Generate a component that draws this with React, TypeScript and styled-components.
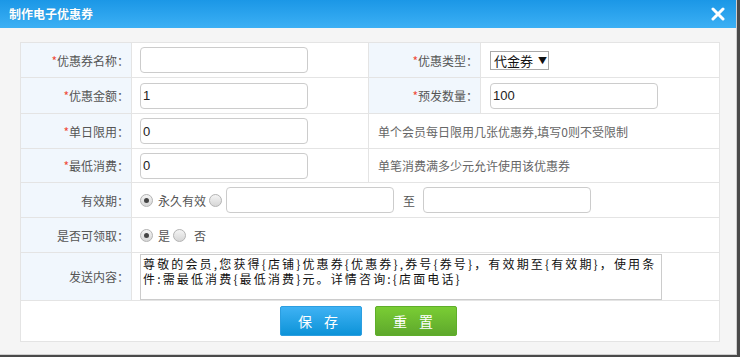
import React, { useState } from 'react';
import styled, { createGlobalStyle } from 'styled-components';

const GlobalStyle = createGlobalStyle`
  html, body {
    margin: 0;
    padding: 0;
    background: #4a4a4a;
  }
  * {
    box-sizing: border-box;
  }
`;

const Screen = styled.div`
  width: 740px;
  height: 357px;
  background: #4a4a4a;
  overflow: hidden;
`;

const Dialog = styled.div`
  width: 737px;
  height: 355px;
  background: #f5f5f5;
  border-right: 1px solid #cfcfcf;
  border-bottom: 1px solid #cfcfcf;
  display: flex;
  flex-direction: column;
  font-family: 'Noto Sans CJK SC', 'Noto Sans', sans-serif;
`;

const TitleBar = styled.div`
  height: 28px;
  flex-shrink: 0;
  display: flex;
  align-items: center;
  justify-content: space-between;
  padding: 0 11px 0 9px;
  background: linear-gradient(#1b97e6, #3cb0f4);
`;

const Title = styled.span`
  color: #ffffff;
  font-size: 12px;
  font-weight: 700;
  line-height: 16px;
  text-shadow: 0 0 1px rgba(0, 0, 0, 0.15);
`;

const CloseButton = styled.button`
  width: 14px;
  height: 14px;
  padding: 0;
  border: 0;
  background: transparent;
  cursor: pointer;
  display: flex;
`;

const Body = styled.div`
  padding: 14px 18px 0 20px;
`;

const FormTable = styled.table`
  width: 699px;
  border-collapse: collapse;
  table-layout: fixed;
  background: #ffffff;
  font-size: 12px;
  color: #555;

  td {
    border: 1px solid #e4e4e4;
    padding: 0;
  }
`;

const Row = styled.tr<{ h?: number }>`
  td {
    height: ${p => p.h || 35}px;
  }
`;

const LabelCell = styled.td`
  background: #f1f7fd;
  text-align: right;
  padding-right: 2px !important;
  white-space: nowrap;
`;

const Star = styled.span`
  color: #ef4b3a;
`;

const FieldCell = styled.td<{ pl?: number }>`
  padding-left: ${p => p.pl ?? 8}px !important;
`;

const HintCell = styled.td`
  padding-left: 9px !important;
  color: #666;
`;

const TextInput = styled.input`
  width: 168px;
  height: 26px;
  border: 1px solid #cccccc;
  border-radius: 4px;
  padding: 0 2px;
  font-family: 'Liberation Sans', Arial, sans-serif;
  font-size: 13px;
  color: #222;
  outline: none;
  display: block;
`;

const FakeSelect = styled.div`
  width: 59px;
  height: 19px;
  border: 1px solid #a9a9a9;
  display: flex;
  align-items: center;
  gap: 5px;
  padding-left: 3px;
  font-size: 13px;
  color: #111;
  background: #fff;
`;

const Caret = styled.span`
  font-size: 9px;
  color: #111;
`;

const InlineGroup = styled.div`
  display: flex;
  align-items: center;
`;

const Radio = styled.span<{ checked?: boolean }>`
  width: 13px;
  height: 13px;
  border-radius: 50%;
  border: 1px solid #b4b4b4;
  background: linear-gradient(#f4f4f4, #d6d6d6);
  position: relative;
  flex-shrink: 0;
  cursor: pointer;

  &::after {
    content: '';
    display: ${p => (p.checked ? 'block' : 'none')};
    position: absolute;
    left: 3px;
    top: 3px;
    width: 5px;
    height: 5px;
    border-radius: 50%;
    background: #444;
  }
`;

const RadioText = styled.span<{ ml?: number; mr?: number }>`
  margin-left: ${p => p.ml ?? 5}px;
  margin-right: ${p => p.mr ?? 3}px;
  color: #555;
`;

const DateInput = styled(TextInput)`
  margin-left: 4px;
`;

const ToText = styled.span`
  margin: 0 8px 0 9px;
  color: #555;
`;

const MessageWrap = styled.div`
  width: 522px;
  height: 46px;
  overflow: hidden;
`;

const MessageBox = styled.textarea`
  display: block;
  width: 522px;
  max-width: 522px;
  height: 46px;
  border: 1px solid #cccccc;
  resize: none;
  overflow: hidden;
  padding: 1px 2px;
  font-family: 'Noto Sans CJK SC', sans-serif;
  font-size: 12px;
  line-height: 15px;
  letter-spacing: 2.15px;
  color: #111;
  outline: none;
`;

const ButtonCell = styled.td`
  text-align: center;
`;

const ButtonRow = styled.div`
  display: flex;
  justify-content: center;
  gap: 13px;
  padding-right: 3px;
`;

const ActionButton = styled.button<{ variant: 'blue' | 'green' }>`
  width: 82px;
  height: 30px;
  border: 1px solid ${p => (p.variant === 'blue' ? '#2c9ee0' : '#5fae2a')};
  border-radius: 2px;
  background: ${p =>
    p.variant === 'blue'
      ? 'linear-gradient(#3fb2f4, #0d93d8)'
      : 'linear-gradient(#7acd34, #5ea82c)'};
  color: #ffffff;
  font-family: 'Noto Sans CJK SC', sans-serif;
  font-size: 14px;
  letter-spacing: 12px;
  padding-left: 12px;
  cursor: pointer;
`;

const defaultMessage =
  '尊敬的会员,您获得{店铺}优惠券{优惠券},券号{券号}，有效期至{有效期}，使用条件:需最低消费{最低消费}元。详情咨询:{店面电话}';

function App() {
  const [forever, setForever] = useState(true);
  const [claimable, setClaimable] = useState(true);

  return (
    <Screen>
      <GlobalStyle />
      <Dialog>
        <TitleBar>
          <Title>制作电子优惠券</Title>
          <CloseButton aria-label="关闭">
            <svg width="14" height="14" viewBox="0 0 14 14">
              <path d="M2 2 L12 12 M12 2 L2 12" stroke="#fff" strokeWidth="3" strokeLinecap="round" />
            </svg>
          </CloseButton>
        </TitleBar>
        <Body>
          <FormTable>
            <colgroup>
              <col style={{ width: 111 }} />
              <col style={{ width: 237 }} />
              <col style={{ width: 112 }} />
              <col style={{ width: 239 }} />
            </colgroup>
            <tbody>
              <Row>
                <LabelCell><Star>*</Star>优惠券名称：</LabelCell>
                <FieldCell><TextInput defaultValue="" /></FieldCell>
                <LabelCell><Star>*</Star>优惠类型：</LabelCell>
                <FieldCell pl={9}>
                  <FakeSelect>代金券<Caret>▼</Caret></FakeSelect>
                </FieldCell>
              </Row>
              <Row h={36}>
                <LabelCell><Star>*</Star>优惠金额：</LabelCell>
                <FieldCell><TextInput defaultValue="1" /></FieldCell>
                <LabelCell><Star>*</Star>预发数量：</LabelCell>
                <FieldCell pl={9}><TextInput defaultValue="100" /></FieldCell>
              </Row>
              <Row>
                <LabelCell><Star>*</Star>单日限用：</LabelCell>
                <FieldCell><TextInput defaultValue="0" /></FieldCell>
                <HintCell colSpan={2}>单个会员每日限用几张优惠券,填写0则不受限制</HintCell>
              </Row>
              <Row h={34}>
                <LabelCell><Star>*</Star>最低消费：</LabelCell>
                <FieldCell><TextInput defaultValue="0" /></FieldCell>
                <HintCell colSpan={2}>单笔消费满多少元允许使用该优惠券</HintCell>
              </Row>
              <Row>
                <LabelCell>有效期：</LabelCell>
                <FieldCell colSpan={3}>
                  <InlineGroup>
                    <Radio checked={forever} onClick={() => setForever(true)} />
                    <RadioText>永久有效</RadioText>
                    <Radio checked={!forever} onClick={() => setForever(false)} />
                    <DateInput />
                    <ToText>至</ToText>
                    <TextInput />
                  </InlineGroup>
                </FieldCell>
              </Row>
              <Row>
                <LabelCell>是否可领取：</LabelCell>
                <FieldCell colSpan={3}>
                  <InlineGroup>
                    <Radio checked={claimable} onClick={() => setClaimable(true)} />
                    <RadioText>是</RadioText>
                    <Radio checked={!claimable} onClick={() => setClaimable(false)} />
                    <RadioText ml={8}>否</RadioText>
                  </InlineGroup>
                </FieldCell>
              </Row>
              <Row h={48}>
                <LabelCell>发送内容：</LabelCell>
                <FieldCell colSpan={3}>
                  <MessageWrap>
                    <MessageBox defaultValue={defaultMessage} />
                  </MessageWrap>
                </FieldCell>
              </Row>
              <Row h={41}>
                <ButtonCell colSpan={4}>
                  <ButtonRow>
                    <ActionButton variant="blue">保存</ActionButton>
                    <ActionButton variant="green">重置</ActionButton>
                  </ButtonRow>
                </ButtonCell>
              </Row>
            </tbody>
          </FormTable>
        </Body>
      </Dialog>
    </Screen>
  );
}

export default App;
